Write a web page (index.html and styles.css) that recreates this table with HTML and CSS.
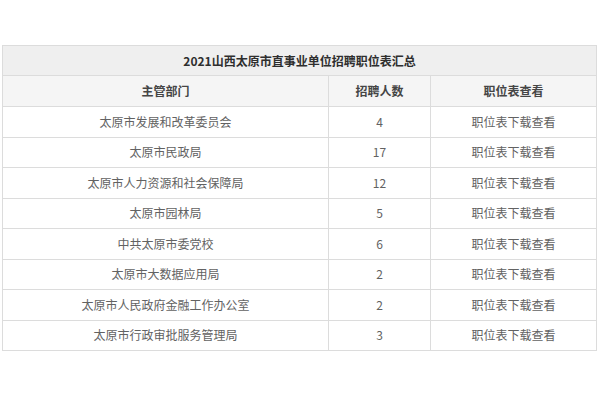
FILE: index.html
```html
<!DOCTYPE html>
<html lang="zh">
<head>
<meta charset="utf-8">
<link rel="stylesheet" href="styles.css">
</head>
<body>
<table class="jobs">
  <colgroup><col class="c1"><col class="c2"><col class="c3"></colgroup>
  <tr class="title-row"><th colspan="3">2021山西太原市直事业单位招聘职位表汇总</th></tr>
  <tr class="head-row"><th>主管部门</th><th>招聘人数</th><th>职位表查看</th></tr>
  <tr><td>太原市发展和改革委员会</td><td>4</td><td>职位表下载查看</td></tr>
  <tr><td>太原市民政局</td><td>17</td><td>职位表下载查看</td></tr>
  <tr><td>太原市人力资源和社会保障局</td><td>12</td><td>职位表下载查看</td></tr>
  <tr><td>太原市园林局</td><td>5</td><td>职位表下载查看</td></tr>
  <tr><td>中共太原市委党校</td><td>6</td><td>职位表下载查看</td></tr>
  <tr><td>太原市大数据应用局</td><td>2</td><td>职位表下载查看</td></tr>
  <tr><td>太原市人民政府金融工作办公室</td><td>2</td><td>职位表下载查看</td></tr>
  <tr><td>太原市行政审批服务管理局</td><td>3</td><td>职位表下载查看</td></tr>
</table>
</body>
</html>
```
FILE: styles.css
```css
html, body {
  margin: 0;
  padding: 0;
  background: #ffffff;
}
body {
  padding: 45px 0 0 2px;
  font-family: "Noto Sans CJK SC", "Noto Sans", sans-serif;
}
.jobs {
  width: 594px;
  border-collapse: collapse;
  table-layout: fixed;
  font-size: 12px;
  color: #626262;
}
.jobs th, .jobs td {
  border: 1px solid #dcdcdc;
  text-align: center;
  padding: 0;
  line-height: 16px;
}
.jobs td {
  height: 29.5px;
}
.title-row th {
  height: 29px;
  background: #efefef;
  color: #2e2e2e;
  font-weight: bold;
}
.head-row th {
  height: 30px;
  background: #f5f5f5;
  color: #454545;
  font-weight: bold;
}
.c1 { width: 326px; }
.c2 { width: 102px; }
.c3 { width: 166px; }
```
